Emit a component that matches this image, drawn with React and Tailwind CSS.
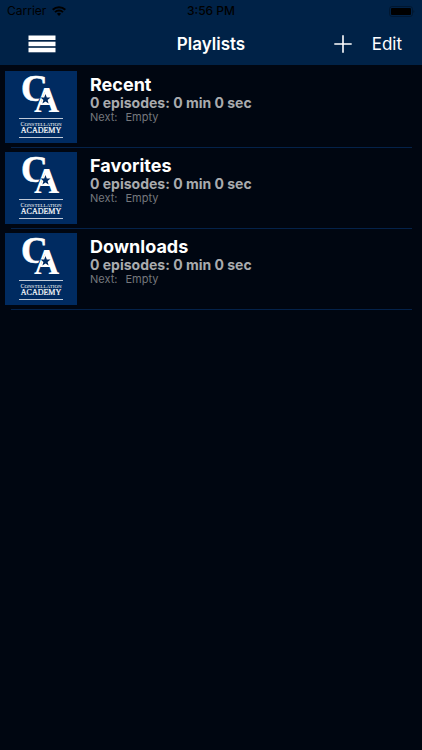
import React, { useState } from 'react';

const playlists = [
  { id: 'recent', name: 'Recent' },
  { id: 'favorites', name: 'Favorites' },
  { id: 'downloads', name: 'Downloads' },
];

const AcademyLogo = () => (
  <svg viewBox="0 0 72 72" className="w-[72px] h-[72px] shrink-0 overflow-visible" role="img" aria-label="Constellation Academy">
    <rect width="72" height="72" fill="#002b61" />
    <g fontFamily="'Liberation Serif', serif" fill="#ffffff">
      <text x="16" y="30" fontSize="37" fontWeight="700" stroke="#ffffff" strokeWidth="0.6">C</text>
      {/* blue outline cuts the A out of the C behind it */}
      <text x="29" y="41" fontSize="35" fontWeight="700" stroke="#002b61" strokeWidth="2" paintOrder="stroke">A</text>
      <polygon points="40,20 43,20 49,34 35,34" />
      <polygon
        points="40.5,23 41.8,26.4 45.5,26.6 42.6,28.9 43.6,32.5 40.5,30.4 37.4,32.5 38.4,28.9 35.5,26.6 39.2,26.4"
        fill="#002b61"
      />
      <rect x="14" y="47" width="44" height="1" opacity="0.75" />
      <text x="36" y="55" fontSize="5" textAnchor="middle">
        <tspan fontSize="6">C</tspan>ONSTELLATION
      </text>
      <text x="36" y="62" fontSize="8" textAnchor="middle" stroke="#ffffff" strokeWidth="0.2">ACADEMY</text>
      <rect x="14" y="66" width="44" height="1" opacity="0.75" />
    </g>
  </svg>
);

const StatusBar = () => (
  <div className="grid grid-cols-3 items-center h-[22px] px-[7px] text-[12px] leading-4 text-black">
    <div className="flex items-center gap-[6px]">
      <span>Carrier</span>
      <svg viewBox="0 0 14 10" className="w-[14px] h-[10px]" fill="none" stroke="#000000" strokeWidth="2">
        <path d="M0.7 3.7a9 9 0 0 1 12.6 0" />
        <path d="M3 6.1a5.7 5.7 0 0 1 8 0" />
        <path d="M7 10 4.9 7.8a3 3 0 0 1 4.2 0z" fill="#000000" stroke="none" />
      </svg>
    </div>
    <span className="text-center font-medium">3:56 PM</span>
    <svg viewBox="0 0 26 11" className="w-[26px] h-[11px] justify-self-end">
      <rect x="0.5" y="0.5" width="23" height="10" rx="2.5" fill="none" stroke="#000000" opacity="0.3" />
      <rect x="2" y="2" width="20" height="7" rx="1" fill="#000000" />
      <path d="M24.5 4v3a2 2 0 0 0 0-3z" fill="#000000" opacity="0.4" />
    </svg>
  </div>
);

const PlaylistRow = ({ name }) => (
  <li className="h-[81px] flex flex-col justify-between">
    <div className="flex gap-[13px] pt-1 pl-[5px]">
      <AcademyLogo />
      <div className="pt-1 min-w-0">
        <h2 className="text-[18px] leading-5 font-bold text-white">{name}</h2>
        <p className="text-[14px] leading-4 font-bold text-[#a9abae]">0 episodes: 0 min 0 sec</p>
        <p className="flex gap-2 text-[11px] leading-3 text-[#75787d]">
          <span>Next:</span>
          <span>Empty</span>
        </p>
      </div>
    </div>
    <div className="h-px ml-[11px] mr-[10px] bg-[#04224a]" />
  </li>
);

const App = () => {
  const [editing, setEditing] = useState(false);

  return (
    <div className="min-h-screen bg-[#000611] font-[Inter,sans-serif]">
      <header className="bg-[#002247]">
        <StatusBar />
        <nav className="grid grid-cols-3 items-center h-[43px] text-[17px] leading-5 text-white">
          <button type="button" aria-label="Menu" className="justify-self-start ml-7">
            <svg viewBox="0 0 28 18" className="w-7 h-[18px]" fill="#ffffff">
              <rect x="0.5" y="0.5" width="27" height="4.5" />
              <rect x="0.5" y="6.7" width="27" height="4.5" />
              <rect x="0.5" y="12.8" width="27" height="4.5" />
            </svg>
          </button>
          <h1 className="text-center font-semibold">Playlists</h1>
          <div className="flex items-center justify-end gap-5 pr-5">
            <button type="button" aria-label="Add playlist">
              <svg viewBox="0 0 18 18" className="w-[18px] h-[18px]" stroke="#ffffff" strokeWidth="1.6">
                <path d="M9 0.3v17.4M0.3 9h17.4" />
              </svg>
            </button>
            <button type="button" aria-pressed={editing} onClick={() => setEditing(!editing)}>
              Edit
            </button>
          </div>
        </nav>
      </header>

      <ul className="pt-0.5">
        {playlists.map((item) => (
          <PlaylistRow key={item.id} name={item.name} />
        ))}
      </ul>
    </div>
  );
};

export default App;
